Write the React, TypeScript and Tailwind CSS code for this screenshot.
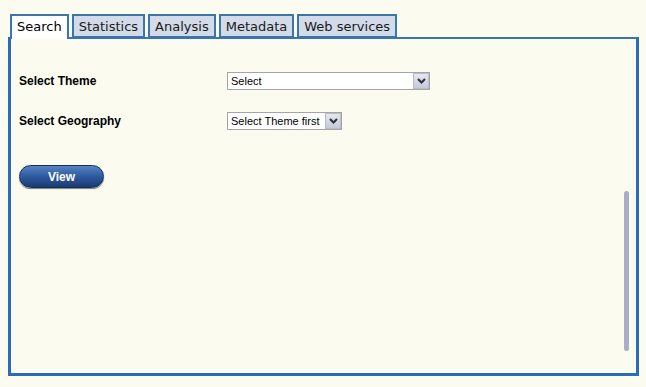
import React from "react";

const TABS = ["Search", "Statistics", "Analysis", "Metadata", "Web services"];

function Chevron() {
  return (
    <svg width="9" height="6" viewBox="0 0 9 6">
      <path d="M1 1 L4.5 4.5 L8 1" fill="none" stroke="#2b2f3a" strokeWidth="2" />
    </svg>
  );
}

function FakeSelect({ label, width }: { label: string; width: string }) {
  return (
    <div
      className={`${width} h-[18px] flex items-center bg-white border border-[#a5a5a5] font-['Liberation_Sans',Arial,sans-serif] text-[11px] text-black`}
    >
      <span className="flex-1 pl-[3px] leading-none whitespace-nowrap overflow-hidden">{label}</span>
      <span className="w-[16px] h-[16px] flex items-center justify-center border border-[#b9bcc8] bg-gradient-to-b from-[#e6e8f0] to-[#c4c8d8]">
        <Chevron />
      </span>
    </div>
  );
}

export default function App() {
  return (
    <div className="w-[646px] h-[387px] bg-[#fbfbf0] pt-[14px] pl-[8px] font-['DejaVu_Sans',Verdana,sans-serif]">
      <div className="w-[631px]">
        <div className="flex gap-[3px] pl-[2px] h-[23px] relative z-10">
          {TABS.map((t, i) => (
            <div
              key={t}
              className={
                i === 0
                  ? "h-[25px] px-[5px] border-2 border-b-0 border-[#3a75ae] bg-white text-[13px] leading-[22px] text-black"
                  : "h-[24px] px-[5px] border-2 border-[#3a75ae] bg-[#d3dae8] text-[13px] leading-[21px] text-[#1a1a1a]"
              }
            >
              {t}
            </div>
          ))}
        </div>
        <div className="h-[339px] border-t-2 border-t-[#3a75ae] border-x-[3px] border-b-[3px] border-x-[#2a6cb5] border-b-[#2a6cb5] flex">
          <div className="flex-1 pl-[8px] pt-[33px] font-['Liberation_Sans',Arial,sans-serif]">
            <div className="flex items-center h-[18px]">
              <div className="w-[208px] text-[12px] font-bold text-black">Select Theme</div>
              <FakeSelect label="Select" width="w-[203px]" />
            </div>
            <div className="flex items-center h-[18px] mt-[22px]">
              <div className="w-[208px] text-[12px] font-bold text-black">Select Geography</div>
              <FakeSelect label="Select Theme first" width="w-[115px]" />
            </div>
            <button className="mt-[35px] w-[85px] h-[23px] rounded-full bg-gradient-to-b from-[#5783c4] via-[#2d5a9e] to-[#1b3b74] border border-[#16305e] shadow-[0_1px_1px_rgba(0,0,0,0.5)] text-white text-[12px] font-bold leading-none">
              View
            </button>
          </div>
          <div className="w-[12px] pr-[7px] pt-[152px]">
            <div className="w-[5px] h-[160px] rounded-full bg-[#a7aec6]" />
          </div>
        </div>
      </div>
    </div>
  );
}
